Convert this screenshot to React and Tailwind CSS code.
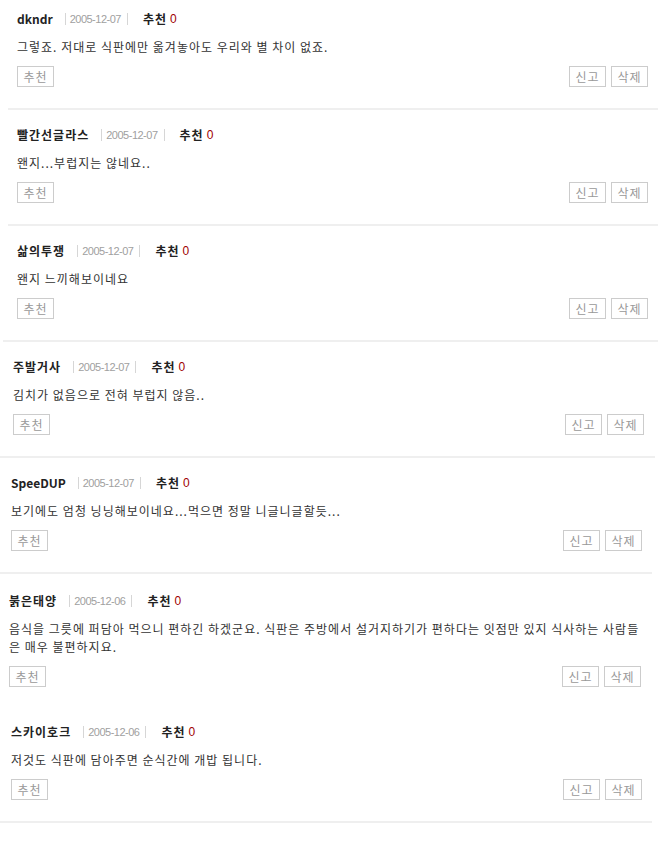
const comments = [
  {
    name: 'dkndr',
    date: '2005-12-07',
    text: ['그렇죠. 저대로 식판에만 옮겨놓아도 우리와 별 차이 없죠.'],
    box: 'ml-[8px] w-[650px] pt-[11px] border-b-2',
    inner: 'pl-[9px] pr-[10px]',
  },
  {
    name: '빨간선글라스',
    date: '2005-12-07',
    text: ['왠지...부럽지는 않네요..'],
    box: 'ml-[8px] w-[650px] pt-[17px] border-b-2',
    inner: 'pl-[9px] pr-[10px]',
  },
  {
    name: '삶의투쟁',
    date: '2005-12-07',
    text: ['왠지 느끼해보이네요'],
    box: 'ml-[3px] w-[655px] pt-[17px] border-b-2',
    inner: 'pl-[14px] pr-[10px]',
  },
  {
    name: '주발거사',
    date: '2005-12-07',
    text: ['김치가 없음으로 전혀 부럽지 않음..'],
    box: 'ml-0 w-[655px] pt-[17px] border-b-2',
    inner: 'pl-[13px] pr-[11px]',
  },
  {
    name: 'SpeeDUP',
    date: '2005-12-07',
    text: ['보기에도 엄청 닝닝해보이네요...먹으면 정말 니글니글할듯...'],
    box: 'ml-0 w-[652px] pt-[17px] border-b-2',
    inner: 'pl-[11px] pr-[10px]',
  },
  {
    name: '붉은태양',
    date: '2005-12-06',
    text: [
      '음식을 그릇에 퍼담아 먹으니 편하긴 하겠군요. 식판은 주방에서 설거지하기가 편하다는 잇점만 있지 식사하는 사람들',
      '은 매우 불편하지요.',
    ],
    box: 'ml-0 w-[652px] pt-[19px]',
    inner: 'pl-[9px] pr-[11px]',
  },
  {
    name: '스카이호크',
    date: '2005-12-06',
    text: ['저것도 식판에 담아주면 순식간에 개밥 됩니다.'],
    box: 'ml-0 w-[652px] pt-[16px] border-b-2',
    inner: 'pl-[11px] pr-[10px]',
  },
];

const latin = /^[A-Za-z0-9]+$/;

function SmallButton({ children }) {
  return (
    <button
      type="button"
      className="h-[21px] w-[37px] border border-[#cccccc] bg-white text-[12px] leading-[19px] tracking-[1px] text-[#999999]"
    >
      {children}
    </button>
  );
}

function Comment({ c }) {
  return (
    <div className={`${c.box} border-[#efefef] pb-[21px]`}>
      <div className={c.inner}>
        <div className="flex items-center h-[16px] text-[12px]">
          <span
            className={
              latin.test(c.name)
                ? 'font-bold text-[#222222]'
                : 'font-bold text-[#222222] tracking-[1px]'
            }
          >
            {c.name}
          </span>
          <span className="ml-[12px] h-[12px] border-l border-[#d6d6d6]" />
          <span
            className="ml-[4px] text-[11px] tracking-[-0.5px] text-[#a0a0a0]"
            style={{ fontFamily: '"Liberation Sans", Arial, sans-serif' }}
          >
            {c.date}
          </span>
          <span className="ml-[6px] h-[12px] border-l border-[#d6d6d6]" />
          <span className="ml-[15px] font-bold tracking-[1px] text-[#222222]">추천</span>
          <span
            className="ml-[3px] text-[12px] text-[#a00000]"
            style={{ fontFamily: '"Liberation Sans", Arial, sans-serif' }}
          >
            0
          </span>
        </div>
        <div className="mt-[11px] text-[12px] leading-[18px] tracking-[1px] text-[#333333] whitespace-nowrap">
          {c.text.map((t, i) => (
            <p key={i}>{t}</p>
          ))}
        </div>
        <div className="mt-[10px] flex items-center justify-between">
          <SmallButton>추천</SmallButton>
          <div className="flex gap-[5px]">
            <SmallButton>신고</SmallButton>
            <SmallButton>삭제</SmallButton>
          </div>
        </div>
      </div>
    </div>
  );
}

export default function App() {
  return (
    <div
      className="w-[665px] min-h-[852px] bg-white"
      style={{ fontFamily: '"Noto Sans CJK KR", "Noto Sans", sans-serif' }}
    >
      {comments.map((c, i) => (
        <Comment key={i} c={c} />
      ))}
    </div>
  );
}
